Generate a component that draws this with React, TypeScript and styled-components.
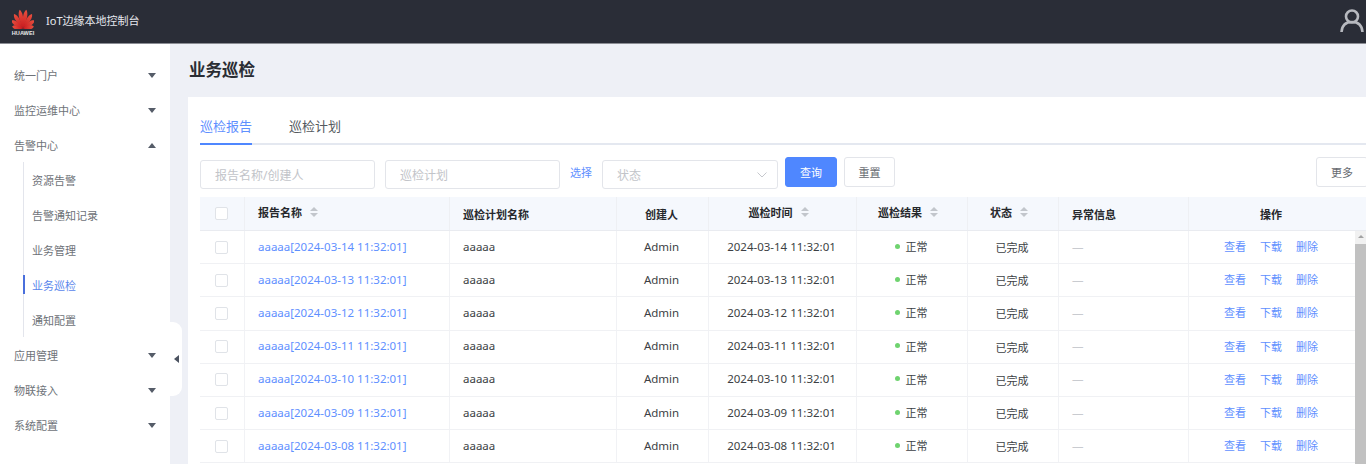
import React from 'react'
import styled, { createGlobalStyle } from 'styled-components'

const GlobalStyle = createGlobalStyle`
  html, body {
    margin: 0;
    height: 100%;
    overflow: hidden;
    background: #eef0f6;
    font-family: "Noto Sans", "Noto Sans CJK SC", sans-serif;
  }
  * { box-sizing: border-box; }
`

const COLUMNS = '45px 205px 167px 92px 148px 111px 91px 130px 166px'
const BLUE = '#4f87ff'
const LINK = '#5f90ff'

const Page = styled.div`
  width: 1366px;
  height: 464px;
  display: flex;
  flex-direction: column;
  overflow: hidden;
`
const TopBar = styled.header`
  flex: 0 0 44px;
  display: flex;
  align-items: center;
  background: #2a2d37;
  border-bottom: 1px solid #8b8d94;
  padding: 0 2px 3px 12px;
`
const Logo = styled.div`
  width: 22px;
  display: flex;
  flex-direction: column;
  align-items: center;
  margin-top: 4px;
`
const LogoText = styled.span`
  font: 600 5.6px/6px "Liberation Sans", sans-serif;
  color: #e8e8e8;
  margin-top: 1px;
`
const AppName = styled.span`
  margin-left: 12px;
  font-size: 11px;
  color: #e6e8ee;
`
const UserIcon = styled.svg`
  margin-left: auto;
  width: 24px;
  height: 24px;
`
const Body = styled.div`
  flex: 1;
  display: flex;
  min-height: 0;
`
const Sidebar = styled.nav`
  position: relative;
  flex: 0 0 170px;
  background: #fff;
  padding-top: 13px;
`
const MenuItem = styled.div`
  height: 35px;
  display: flex;
  align-items: center;
  justify-content: space-between;
  padding: 0 14px;
  font-size: 11px;
  color: #6e7278;
`
const Caret = styled.i<{ $up?: boolean }>`
  width: 0;
  height: 0;
  margin-top: 1px;
  border-left: 4px solid transparent;
  border-right: 4px solid transparent;
  ${(p) => (p.$up ? 'border-bottom: 5px solid #555c68;' : 'border-top: 5px solid #555c68;')}
`
const SubMenu = styled.div`
  margin-left: 23px;
  border-left: 1.5px solid #e3e5ec;
`
const SubItem = styled.div<{ $active?: boolean }>`
  position: relative;
  height: 35px;
  display: flex;
  align-items: center;
  padding-left: 8px;
  font-size: 11px;
  color: ${(p) => (p.$active ? '#5a86ec' : '#6e7278')};
  ${(p) =>
    p.$active &&
    `&::before {
      content: '';
      position: absolute;
      left: -1.5px;
      top: 8px;
      bottom: 8px;
      width: 2px;
      background: #4a6fdc;
    }`}
`
const Collapse = styled.div`
  position: absolute;
  left: 170px;
  top: 278px;
  width: 12px;
  height: 74px;
  background: #fff;
  border-radius: 0 9px 9px 0;
  display: flex;
  align-items: center;
  justify-content: center;
  &::after {
    content: '';
    border-top: 4px solid transparent;
    border-bottom: 4px solid transparent;
    border-right: 5px solid #4b5260;
  }
`
const Main = styled.main`
  flex: 1;
  min-width: 0;
  padding-left: 18px;
`
const PageTitle = styled.h1`
  margin: 0;
  height: 53px;
  display: flex;
  align-items: center;
  padding: 0 0 4px 1px;
  font-size: 16.5px;
  font-weight: 700;
  color: #2a2d33;
`
const Card = styled.section`
  background: #fff;
  padding: 0 0 0 12px;
  height: 400px;
`
const Tabs = styled.div`
  height: 48px;
  display: flex;
  gap: 37px;
  border-bottom: 2px solid #e4e8f0;
`
const Tab = styled.div<{ $active?: boolean }>`
  height: 48px;
  padding-top: 20px;
  font-size: 13px;
  line-height: 18px;
  color: ${(p) => (p.$active ? LINK : '#555a60')};
  border-bottom: 2px solid ${(p) => (p.$active ? BLUE : 'transparent')};
`
const Toolbar = styled.div`
  height: 52px;
  display: flex;
  align-items: flex-start;
  padding-top: 12px;
`
const Field = styled.div<{ $w?: number; $gap?: number }>`
  width: ${(p) => p.$w ?? 175}px;
  height: 29px;
  margin: 3px ${(p) => p.$gap ?? 10}px 0 0;
  padding: 0 10px 0 14px;
  display: flex;
  align-items: center;
  justify-content: space-between;
  border: 1px solid #e3e5ea;
  border-radius: 3px;
  font-size: 12px;
  color: #c2c4c9;
`
const PickLink = styled.a`
  margin: 3px 10px 0 0;
  line-height: 26px;
  font-size: 11px;
  color: ${LINK};
`
const Button = styled.button<{ $primary?: boolean }>`
  width: ${(p) => (p.$primary ? 52 : 51)}px;
  height: 30px;
  margin-right: 7px;
  padding: 0;
  font: inherit;
  font-size: 11px;
  border-radius: 3px;
  border: 1px solid ${(p) => (p.$primary ? BLUE : '#e3e5ea')};
  background: ${(p) => (p.$primary ? BLUE : '#fff')};
  color: ${(p) => (p.$primary ? '#fff' : '#666a70')};
`
const MoreButton = styled(Button)`
  margin: 0 -2px 0 auto;
  width: 52px;
`
const HeadRow = styled.div`
  display: grid;
  grid-template-columns: ${COLUMNS} 11px;
  height: 34px;
  background: #f5f8fd;
  border-bottom: 1px solid #e9ebf0;
`
const HeadCell = styled.div<{ $left?: boolean; $last?: boolean }>`
  display: flex;
  align-items: center;
  justify-content: ${(p) => (p.$left ? 'flex-start' : 'center')};
  padding-left: ${(p) => (p.$left ? 13 : 0)}px;
  padding-right: ${(p) => (p.$left ? 0 : 2)}px;
  border-right: ${(p) => (p.$last ? 'none' : '1px solid #eef0f4')};
  font-size: 11px;
  font-weight: 700;
  color: #26282c;
`
const SortLabel = styled.span<{ $left?: boolean }>`
  display: flex;
  align-items: center;
  gap: 8px;
  margin: -4px ${(p) => (p.$left ? 0 : 6)}px 0 0;
`
const SortIcon = styled.span`
  display: flex;
  flex-direction: column;
  gap: 2px;
  &::before, &::after {
    content: '';
    width: 0;
    height: 0;
    border-left: 4px solid transparent;
    border-right: 4px solid transparent;
  }
  &::before { border-bottom: 4.5px solid #c2c6cc; }
  &::after { border-top: 4.5px solid #c2c6cc; }
`
const Check = styled.span`
  width: 13px;
  height: 13px;
  background: #fff;
  border: 1px solid #e0e3e8;
  border-radius: 2px;
`
const RowCheck = styled(Check)`
  margin-top: 2px;
`
const TableBody = styled.div`
  display: flex;
`
const Rows = styled.div`
  flex: 1;
  min-width: 0;
`
const Row = styled.div`
  display: grid;
  grid-template-columns: ${COLUMNS};
  height: 33.2px;
  border-bottom: 1.5px solid #f0f1f4;
`
const Cell = styled.div<{ $left?: boolean; $link?: boolean; $last?: boolean }>`
  display: flex;
  align-items: center;
  justify-content: ${(p) => (p.$left ? 'flex-start' : 'center')};
  padding: 0 ${(p) => (p.$left ? 0 : 2)}px 2px ${(p) => (p.$left ? 13 : 0)}px;
  border-right: ${(p) => (p.$last ? 'none' : '1px solid #f1f2f5')};
  font-size: 11.5px;
  color: ${(p) => (p.$link ? LINK : '#3c3f44')};
  white-space: nowrap;
`
const Status = styled.span`
  display: flex;
  align-items: center;
  font-size: 11px;
`
const Done = styled.span`
  margin-top: 2px;
  font-size: 11px;
`
const Dot = styled.i`
  width: 5px;
  height: 5px;
  margin-right: 6px;
  border-radius: 50%;
  background: #6fd36f;
`
const Dash = styled.span`
  color: #c9cbd0;
`
const Actions = styled.div`
  display: flex;
  gap: 14px;
`
const Action = styled.a`
  font-size: 11px;
  color: ${LINK};
`
const ScrollTrack = styled.div`
  flex: 0 0 11px;
  height: 240px;
  background: #f1f1f1;
  display: flex;
  flex-direction: column;
  align-items: center;
  padding-top: 4px;
  &::before {
    content: '';
    border-left: 3px solid transparent;
    border-right: 3px solid transparent;
    border-bottom: 3px solid #a3a3a3;
  }
  &::after {
    content: '';
    width: 100%;
    margin-top: 6px;
    flex: 1;
    background: #c1c1c1;
  }
`

const MENU_TOP = ['统一门户', '监控运维中心']
const MENU_SUB = ['资源告警', '告警通知记录', '业务管理', '业务巡检', '通知配置']
const MENU_BOTTOM = ['应用管理', '物联接入', '系统配置']
const DATES = ['14', '13', '12', '11', '10', '09', '08']

// angle from vertical, length of the petal in px
const PETALS = [
  [-80, 11],
  [-55, 14],
  [-32, 17],
  [-10, 19],
  [10, 19],
  [32, 17],
  [55, 14],
  [80, 11],
]

function Petals() {
  return (
    <svg width="22" height="20" viewBox="0.5 0 22 20">
      <defs>
        <linearGradient id="petal" x1="0" y1="0" x2="0" y2="1">
          <stop offset="0" stopColor="#e8503f" />
          <stop offset="1" stopColor="#c9191e" />
        </linearGradient>
      </defs>
      {PETALS.map(([a, l]) => (
        <path
          key={a}
          d={`M11.5 19.5 C8.6 ${19.5 - l * 0.55} 9 ${19.5 - l * 0.85} 11.5 ${19.5 - l} C14 ${19.5 - l * 0.85} 14.4 ${19.5 - l * 0.55} 11.5 19.5 Z`}
          fill="url(#petal)"
          transform={`rotate(${a} 11.5 19.5)`}
        />
      ))}
    </svg>
  )
}

const App = () => {
  return (
    <Page>
      <GlobalStyle />
      <TopBar>
        <Logo>
          <Petals />
          <LogoText>HUAWEI</LogoText>
        </Logo>
        <AppName>IoT边缘本地控制台</AppName>
        <UserIcon viewBox="0 0 24 24" fill="none" stroke="#b7b9bf" strokeWidth="2.6">
          <circle cx="12" cy="8.5" r="6" />
          <path d="M1.5 24 C2 17 6.5 14 12 14 C17.5 14 22 17 22.5 24" />
        </UserIcon>
      </TopBar>
      <Body>
        <Sidebar>
          {MENU_TOP.map((m) => (
            <MenuItem key={m}>
              {m}
              <Caret />
            </MenuItem>
          ))}
          <MenuItem>
            告警中心
            <Caret $up />
          </MenuItem>
          <SubMenu>
            {MENU_SUB.map((m) => (
              <SubItem key={m} $active={m === '业务巡检'}>
                {m}
              </SubItem>
            ))}
          </SubMenu>
          {MENU_BOTTOM.map((m) => (
            <MenuItem key={m}>
              {m}
              <Caret />
            </MenuItem>
          ))}
          <Collapse />
        </Sidebar>
        <Main>
          <PageTitle>业务巡检</PageTitle>
          <Card>
            <Tabs>
              <Tab $active>巡检报告</Tab>
              <Tab>巡检计划</Tab>
            </Tabs>
            <Toolbar>
              <Field>报告名称/创建人</Field>
              <Field>巡检计划</Field>
              <PickLink>选择</PickLink>
              <Field $w={176} $gap={7}>
                状态
                <svg width="10" height="6" viewBox="0 0 10 6" fill="none" stroke="#c6c8cd" strokeWidth="1">
                  <path d="M0.5 0.5 L5 5 L9.5 0.5" />
                </svg>
              </Field>
              <Button $primary>查询</Button>
              <Button>重置</Button>
              <MoreButton>更多</MoreButton>
            </Toolbar>
            <HeadRow>
              <HeadCell>
                <Check />
              </HeadCell>
              <HeadCell $left>
                <SortLabel $left>
                  报告名称
                  <SortIcon />
                </SortLabel>
              </HeadCell>
              <HeadCell $left>巡检计划名称</HeadCell>
              <HeadCell>创建人</HeadCell>
              <HeadCell>
                <SortLabel>
                  巡检时间
                  <SortIcon />
                </SortLabel>
              </HeadCell>
              <HeadCell>
                <SortLabel>
                  巡检结果
                  <SortIcon />
                </SortLabel>
              </HeadCell>
              <HeadCell>
                <SortLabel>
                  状态
                  <SortIcon />
                </SortLabel>
              </HeadCell>
              <HeadCell $left>异常信息</HeadCell>
              <HeadCell $last>操作</HeadCell>
              <HeadCell $last />
            </HeadRow>
            <TableBody>
              <Rows>
                {DATES.map((d) => (
                  <Row key={d}>
                    <Cell>
                      <RowCheck />
                    </Cell>
                    <Cell $left $link>
                      aaaaa[2024-03-{d} 11:32:01]
                    </Cell>
                    <Cell $left>aaaaa</Cell>
                    <Cell>Admin</Cell>
                    <Cell>2024-03-{d} 11:32:01</Cell>
                    <Cell>
                      <Status>
                        <Dot />
                        正常
                      </Status>
                    </Cell>
                    <Cell>
                      <Done>已完成</Done>
                    </Cell>
                    <Cell $left>
                      <Dash>—</Dash>
                    </Cell>
                    <Cell $last>
                      <Actions>
                        <Action>查看</Action>
                        <Action>下载</Action>
                        <Action>删除</Action>
                      </Actions>
                    </Cell>
                  </Row>
                ))}
              </Rows>
              <ScrollTrack />
            </TableBody>
          </Card>
        </Main>
      </Body>
    </Page>
  )
}

export default App
